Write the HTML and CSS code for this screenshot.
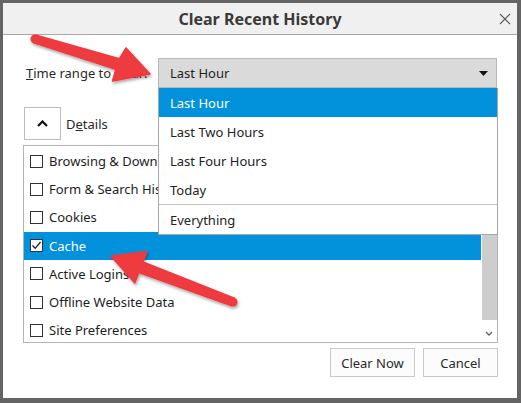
FILE: index.html
```html
<!DOCTYPE html>
<html>
<head>
<meta charset="utf-8">
<link rel="stylesheet" href="styles.css">
</head>
<body>
<div class="window">
  <div class="titlebar">
    <span class="title">Clear Recent History</span>
    <span class="close"><svg width="12" height="12" viewBox="0 0 12 12"><path d="M1 1L11 11M11 1L1 11" stroke="#5a5a5a" stroke-width="1.1" fill="none"/></svg></span>
  </div>
  <div class="content">
    <div class="range-row">
      <span class="range-label"><u>T</u>ime range to clear:</span>
      <div class="select">
        <span>Last Hour</span>
        <svg class="caret" width="9" height="5" viewBox="0 0 9 5"><path d="M0 0H9L4.5 5Z" fill="#111"/></svg>
        <ul class="popup">
          <li class="opt active">Last Hour</li>
          <li class="opt">Last Two Hours</li>
          <li class="opt">Last Four Hours</li>
          <li class="opt">Today</li>
          <li class="sep"></li>
          <li class="opt">Everything</li>
        </ul>
      </div>
    </div>
    <div class="details-row">
      <button class="details-btn"><svg width="11" height="7" viewBox="0 0 11 7"><path d="M1 6L5.5 1.5L10 6" stroke="#111" stroke-width="2.2" fill="none"/></svg></button>
      <span class="details-label">D<u>e</u>tails</span>
    </div>
    <div class="listbox">
      <div class="items">
        <div class="row"><span class="cb"></span><span class="lbl">Browsing &amp; Download History</span></div>
        <div class="row"><span class="cb"></span><span class="lbl">Form &amp; Search History</span></div>
        <div class="row"><span class="cb"></span><span class="lbl">Cookies</span></div>
        <div class="row selected"><span class="cb checked"><svg width="11" height="11" viewBox="0 0 11 11"><path d="M1.5 5.5L4.2 8.3L9.5 2" stroke="#222" stroke-width="1.3" fill="none"/></svg></span><span class="lbl">Cache</span></div>
        <div class="row"><span class="cb"></span><span class="lbl">Active Logins</span></div>
        <div class="row"><span class="cb"></span><span class="lbl">Offline Website Data</span></div>
        <div class="row"><span class="cb"></span><span class="lbl">Site Preferences</span></div>
      </div>
      <div class="scrollbar">
        <div class="sb-btn"><svg width="8" height="5" viewBox="0 0 8 5"><path d="M1 4L4 1L7 4" stroke="#606060" stroke-width="1.3" fill="none"/></svg></div>
        <div class="thumb"></div>
        <div class="sb-space"></div>
        <div class="sb-btn"><svg width="8" height="5" viewBox="0 0 8 5"><path d="M1 1L4 4L7 1" stroke="#606060" stroke-width="1.3" fill="none"/></svg></div>
      </div>
    </div>
    <div class="actions">
      <button class="btn btn-clear">Clear Now</button>
      <button class="btn btn-cancel">Cancel</button>
    </div>
  </div>
</div>
<svg class="arrows" width="521" height="403" viewBox="0 0 521 403">
  <defs>
    <filter id="sh" x="-20%" y="-20%" width="140%" height="140%">
      <feDropShadow dx="1" dy="2" stdDeviation="1.5" flood-color="#000" flood-opacity="0.35"/>
    </filter>
  </defs>
  <g fill="#ee3a3f" stroke="#ee3a3f" stroke-width="1.5" stroke-linejoin="round" filter="url(#sh)">
    <polygon points="36.2,35.2 119.3,58.8 126,48 150,74 112.5,81 115.8,69.4 33.8,42.8"/>
    <circle cx="35" cy="39" r="3.8"/>
    <polygon points="234.4,298.2 143,262 146.8,251.6 111,256 134.8,283 138.8,272.5 231.6,305.8"/>
    <circle cx="233" cy="302" r="3.8"/>
  </g>
</svg>
</body>
</html>
```
FILE: styles.css
```css
* { box-sizing: border-box; }
html, body { margin: 0; padding: 0; }
body {
  background: #646464;
  width: 521px;
  height: 403px;
  padding: 3px 4px 5px 3px;
  font-family: "Noto Sans", "Open Sans", sans-serif;
  font-size: 13px;
  color: #1e1e1e;
  position: relative;
  overflow: hidden;
}
.window {
  width: 514px;
  height: 395px;
  background: #fff;
  display: flex;
  flex-direction: column;
}
.titlebar {
  height: 32px;
  background: #f0f0f0;
  border-bottom: 1px solid #a9a9a9;
  display: flex;
  align-items: center;
  justify-content: center;
  position: relative;
}
.title {
  font-weight: bold;
  font-size: 16px;
  color: #3a3a3a;
}
.close {
  position: absolute;
  right: 6px;
  top: 10px;
  display: flex;
}
.content {
  padding: 23px 19px 0 20px;
  display: flex;
  flex-direction: column;
}
.range-row {
  display: flex;
  align-items: center;
  height: 30px;
  padding-right: 1px;
}
.range-label {
  width: 135px;
  padding-left: 3px;
  color: #2a2a2a;
}
.select {
  flex: 1;
  height: 30px;
  background: #dadada;
  border: 1px solid #b8b8b8;
  display: flex;
  align-items: center;
  justify-content: space-between;
  padding: 0 8px 0 11px;
  position: relative;
}
.popup {
  position: absolute;
  top: 29px;
  left: -1px;
  right: -2px;
  margin: 0;
  padding: 0;
  list-style: none;
  background: #fff;
  border: 1px solid #a8a8a8;
  border-top: none;
  z-index: 5;
}
.opt {
  height: 29px;
  line-height: 27px;
  padding: 2px 0 0 11px;
  color: #222;
}
.opt.active {
  background: #0291db;
  color: #fff;
}
.sep {
  height: 1px;
  background: #c4c4c4;
}
.details-row {
  margin-top: 19px;
  height: 33px;
  display: flex;
  align-items: center;
  gap: 5px;
}
.details-btn {
  margin-left: 1px;
  width: 37px;
  height: 33px;
  background: #fff;
  border: 1px solid #bdbdbd;
  padding: 0;
  display: flex;
  align-items: center;
  justify-content: center;
}
.details-label { color: #2a2a2a; }
.listbox {
  margin-top: 5px;
  height: 198px;
  border: 1px solid #b4b4b4;
  display: flex;
}
.items {
  flex: 1;
  padding-top: 1px;
}
.row {
  height: 28.2px;
  display: flex;
  align-items: center;
  padding-left: 6px;
  gap: 6px;
  white-space: nowrap;
}
.row.selected {
  background: #0291db;
  color: #fff;
}
.cb {
  width: 13px;
  height: 13px;
  border: 1px solid #333;
  background: #fff;
  display: flex;
  align-items: center;
  justify-content: center;
  flex: none;
}
.scrollbar {
  width: 16px;
  display: flex;
  flex-direction: column;
}
.sb-btn {
  height: 17px;
  display: flex;
  align-items: center;
  justify-content: center;
}
.thumb {
  height: 157px;
  background: #cdcdcd;
  margin: 0 0 0 1px;
}
.sb-space { flex: 1; }
.actions {
  margin-top: 5px;
  display: flex;
  justify-content: flex-end;
  gap: 8px;
}
.btn {
  height: 29px;
  background: #fcfcfc;
  border: 1px solid #c9c9c9;
  font-family: "Noto Sans", "Open Sans", sans-serif;
  font-size: 13px;
  color: #2a2a2a;
  padding: 0;
}
.btn-clear { width: 85px; }
.btn-cancel { width: 75px; }
.arrows {
  position: absolute;
  left: 0;
  top: 0;
  pointer-events: none;
  z-index: 10;
}
```
